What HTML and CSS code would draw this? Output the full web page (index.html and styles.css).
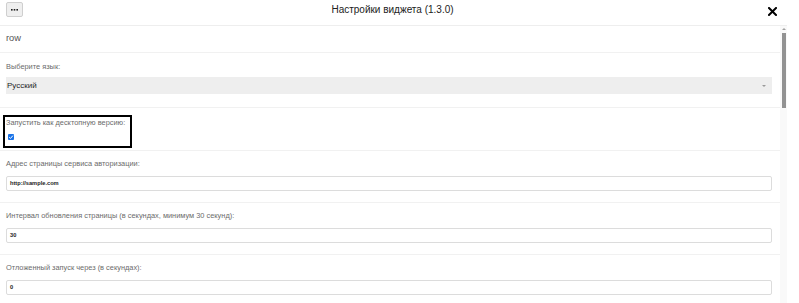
FILE: index.html
```html
<!DOCTYPE html>
<html lang="ru">
<head>
<meta charset="utf-8">
<title>Настройки виджета</title>
<link rel="stylesheet" href="styles.css">
</head>
<body>
<div class="frame">
  <header class="header">
    <button class="menu-btn" type="button" aria-label="Меню">
      <svg width="7" height="2" viewBox="0 0 7 2"><rect x="0" y="0" width="1.6" height="1.6" fill="#222"/><rect x="2.7" y="0" width="1.6" height="1.6" fill="#222"/><rect x="5.4" y="0" width="1.6" height="1.6" fill="#222"/></svg>
    </button>
    <div class="title">Настройки виджета (1.3.0)</div>
    <button class="close-btn" type="button" aria-label="Закрыть">
      <svg width="9" height="9" viewBox="0 0 9 9"><path d="M1 1 L8 8 M8 1 L1 8" stroke="#000" stroke-width="2" stroke-linecap="square"/></svg>
    </button>
  </header>
  <div class="body">
    <main class="content">
      <div class="row-name">row</div>
      <div class="field field-lang">
        <div class="label">Выберите язык:</div>
        <div class="select">
          <span class="select-text">Русский</span>
          <span class="caret"></span>
        </div>
      </div>
      <div class="field field-check">
        <div class="highlight">
          <div class="label">Запустить как десктопную версию:</div>
          <span class="checkbox">
            <svg width="6" height="6" viewBox="0 0 6 6"><path d="M1.2 3.2 L2.5 4.4 L4.9 1.6" stroke="#fff" stroke-width="1" fill="none"/></svg>
          </span>
        </div>
      </div>
      <div class="field">
        <div class="label">Адрес страницы сервиса авторизации:</div>
        <div class="input">http://sample.com</div>
      </div>
      <div class="field">
        <div class="label">Интервал обновления страницы (в секундах, минимум 30 секунд):</div>
        <div class="input">30</div>
      </div>
      <div class="field">
        <div class="label">Отложенный запуск через (в секундах):</div>
        <div class="input">0</div>
      </div>
    </main>
    <div class="scrollbar">
      <span class="arrow"></span>
      <span class="thumb"></span>
    </div>
  </div>
</div>
</body>
</html>
```
FILE: styles.css
```css
* { box-sizing: border-box; }
html, body { margin: 0; padding: 0; background: #fff; }
body {
  font-family: "Liberation Sans", Arial, sans-serif;
  color: #333;
  width: 799px;
  height: 303px;
  overflow: hidden;
}
.frame { width: 787px; }
.header {
  height: 26px;
  border-bottom: 1px solid #eeeeee;
  display: flex;
  align-items: flex-start;
  padding: 2px 10px 0 6px;
}
.menu-btn {
  width: 17px;
  height: 15px;
  margin: 0;
  padding: 0;
  border: 1px solid #cfcfcf;
  border-radius: 2px;
  background: #efefef;
  display: flex;
  align-items: center;
  justify-content: center;
}
.title {
  flex: 1;
  text-align: center;
  font-size: 10px;
  line-height: 16px;
  color: #222;
  padding-right: 6px;
}
.close-btn {
  margin: 5px 0 0 0;
  padding: 0;
  border: 0;
  background: none;
  width: 9px;
  height: 9px;
  display: flex;
}
.body { display: flex; }
.content { width: 780px; }
.row-name {
  height: 27px;
  padding: 0 6px;
  font-size: 9.3px;
  line-height: 25px;
  color: #555;
  border-bottom: 1px solid #f1f1f1;
}
.field {
  height: 52px;
  padding: 7px 8px 0 6px;
  border-bottom: 1px solid #f1f1f1;
}
.label {
  font-size: 7.4px;
  line-height: 12px;
  color: #6b6b6b;
  white-space: nowrap;
}
.field-lang { height: 55px; padding-top: 8px; }
.select {
  margin-top: 4px;
  height: 17px;
  background: #eeeeee;
  display: flex;
  align-items: center;
  justify-content: space-between;
  padding: 0 6px 0 1px;
}
.select-text { font-size: 8px; color: #1e1e1e; }
.caret {
  width: 0; height: 0;
  border-left: 2px solid transparent;
  border-right: 2px solid transparent;
  border-top: 2px solid #9a9a9a;
}
.field-check { height: 43px; padding: 7px 0 0 3px; }
.highlight {
  display: inline-block;
  border: 2px solid #000;
  height: 33px;
  padding: 0 5px 0 1px;
}
.highlight .label { line-height: 11px; }
.checkbox {
  display: flex;
  align-items: center;
  justify-content: center;
  margin: 6px 0 0 2px;
  width: 6px;
  height: 6px;
  border-radius: 1px;
  background: #1a73e8;
}
.input {
  margin-top: 6px;
  height: 15px;
  border: 1px solid #dcdcdc;
  border-radius: 2px;
  padding: 0 3px;
  font-size: 5.7px;
  font-weight: bold;
  line-height: 13px;
  color: #222;
}
.scrollbar {
  width: 7px;
  height: 277px;
  background: #f9f9f9;
  display: flex;
  flex-direction: column;
  align-items: center;
  padding-top: 2px;
}
.arrow {
  width: 0; height: 0;
  border-left: 2px solid transparent;
  border-right: 2px solid transparent;
  border-bottom: 2px solid #a0a0a0;
}
.thumb {
  margin-top: 3px;
  width: 4px;
  height: 75px;
  background: #929292;
}
```
